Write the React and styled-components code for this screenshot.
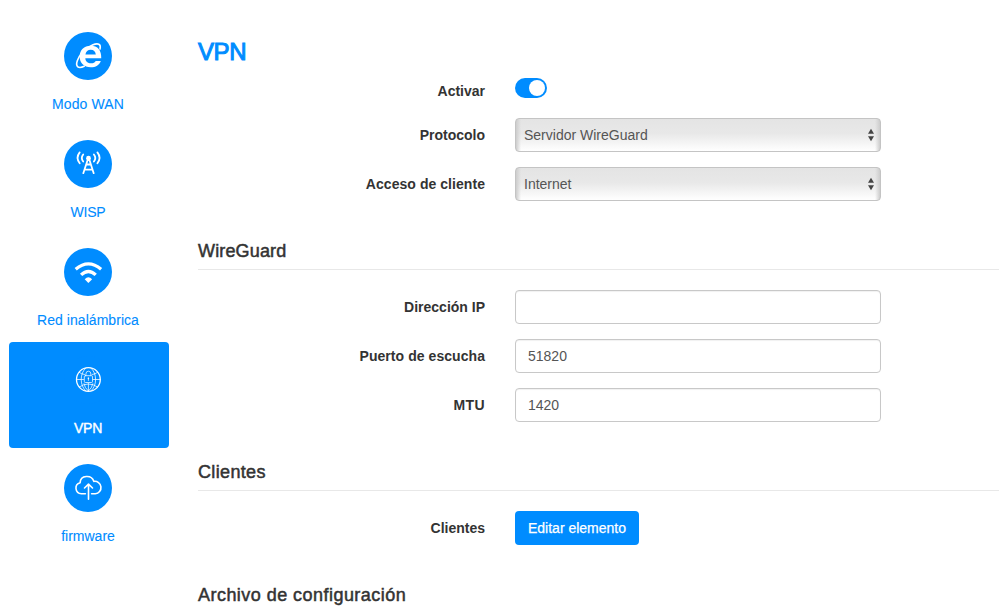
import React, { useState } from 'react';
import styled, { createGlobalStyle } from 'styled-components';

const BLUE = '#008cff';

const GlobalStyle = createGlobalStyle`
  * { box-sizing: border-box; }
  html, body { margin: 0; background: #fff; overflow: hidden; }
  body {
    font-family: "Liberation Sans", Arial, sans-serif;
    font-size: 14px;
    line-height: 20px;
    color: #333;
  }
`;

const Page = styled.div`
  display: flex;
  height: 610px;
  overflow: hidden;
`;

const Sidebar = styled.nav`
  display: flex;
  flex-direction: column;
  gap: 2px;
  width: 169px;
  flex: none;
  padding: 18px 0 0 9px;
`;

const NavItem = styled.a`
  display: flex;
  flex-direction: column;
  align-items: center;
  height: 106px;
  padding: 14px 2px 0 0;
  border-radius: 4px;
  text-decoration: none;
  white-space: nowrap;
  color: ${(p) => (p.$active ? '#fff' : BLUE)};
  background: ${(p) => (p.$active ? BLUE : 'transparent')};
  letter-spacing: ${(p) => p.$tracking || 0}px;
  -webkit-text-stroke: ${(p) => (p.$active ? '0.4px' : '0.1px')};
`;

const IconDisc = styled.span`
  width: 48px;
  height: 48px;
  margin-bottom: 14px;
  border-radius: 50%;
  background: ${BLUE};
  color: #fff;
`;

const Content = styled.main`
  flex: 1;
  min-width: 0;
  padding: 36px 0 0 29px;
`;

const Title = styled.h1`
  margin: 0 0 8px;
  font-size: 24px;
  line-height: 32px;
  font-weight: 400;
  letter-spacing: -0.4px;
  color: ${BLUE};
  -webkit-text-stroke: 1px;
`;

const Section = styled.h2`
  height: 30px;
  margin: 39px 0 20px;
  border-bottom: 1px solid #e8e8e8;
  font-size: 18px;
  line-height: 22px;
  font-weight: 400;
  letter-spacing: ${(p) => p.$tracking || 0}px;
  -webkit-text-stroke: 0.5px;
`;

const Row = styled.div`
  display: grid;
  grid-template-columns: 287px 366px;
  column-gap: 30px;
  height: ${(p) => p.$height || 34}px;
  margin-bottom: ${(p) => p.$gap ?? 15}px;
`;

const Label = styled.label`
  padding-top: ${(p) => p.$top ?? 7}px;
  text-align: right;
  font-weight: 700;
  white-space: nowrap;
  letter-spacing: ${(p) => p.$tracking || 0}px;
`;

const Toggle = styled.button`
  display: flex;
  justify-content: ${(p) => (p.$on ? 'flex-end' : 'flex-start')};
  width: 32px;
  height: 20px;
  margin-top: 2px;
  padding: 2px;
  border: 0;
  border-radius: 10px;
  background: ${(p) => (p.$on ? BLUE : '#ccc')};
`;

const Knob = styled.span`
  width: 16px;
  height: 16px;
  border-radius: 50%;
  background: #fff;
`;

const SelectBox = styled.div`
  display: flex;
  align-items: center;
  justify-content: space-between;
  height: 34px;
  padding: 0 4px 0 8px;
  border: 1px solid #c4c4c4;
  border-radius: 4px;
  background:
    linear-gradient(to right, #cdcdcd, rgba(205, 205, 205, 0) 5px, rgba(205, 205, 205, 0) calc(100% - 5px), #cdcdcd),
    linear-gradient(#e4e4e4, #e8e8e8 45%, #fff);
  color: #555;
`;

const Input = styled.input`
  width: 100%;
  height: 34px;
  padding: 6px 12px;
  border: 1px solid #c8c8c8;
  border-radius: 4px;
  background: #fff;
  box-shadow: inset 0 1px 1px rgba(0, 0, 0, 0.06);
  font: inherit;
  color: #555;
`;

const Button = styled.button`
  justify-self: start;
  width: 124px;
  height: 34px;
  padding: 0;
  border: 0;
  border-radius: 4px;
  background: ${BLUE};
  color: #fff;
  font: inherit;
  white-space: nowrap;
  -webkit-text-stroke: 0.25px;
`;

const Glyph = ({ children }) => (
  <svg width="48" height="48" viewBox="0 0 48 48" fill="none" stroke="currentColor" strokeLinecap="round" strokeLinejoin="round">
    {children}
  </svg>
);

const ExplorerIcon = () => (
  <Glyph>
    <path
      fill="currentColor"
      fillRule="evenodd"
      stroke="none"
      transform="translate(-4.9 .4) scale(1.13 .99)"
      d="M37.3 26H23.2C23.4 29.2 25.4 31.2 28.2 31.2C30.3 31.2 31.7 30.4 32.4 28.8H36.9C35.6 32.8 32.4 35.2 28 35.2C22 35.2 18.2 31 18.2 24.4C18.2 17.8 22 13.4 28 13.4C34.2 13.4 37.5 18 37.3 26ZM23.3 22.4H32.5C32.2 19.3 30.6 17.6 28 17.6C25.4 17.6 23.7 19.3 23.3 22.4Z"
    />
    <path d="M20.2 34.2C14.5 37 11.2 34.8 13.3 28.8C15.4 22.8 21.5 16 28.5 13C34 10.6 37.3 12 36 17" strokeWidth="1.6" />
  </Glyph>
);

const TowerIcon = () => (
  <Glyph>
    <g strokeWidth="1.8">
      <path d="M15.7 12.4Q11.4 17.8 15.7 23.3M19.2 14.5Q16.4 18 19.2 21.5M33.4 12.4Q37.7 17.8 33.4 23.3M29.9 14.5Q32.7 18 29.9 21.5" />
      <path d="M23.8 19.5L19.3 33.2M25.3 19.5L29.7 33.2M22.3 24.5H26.8M20.8 29.7H28.2" />
    </g>
    <circle cx="24.5" cy="18.2" r="2.4" fill="currentColor" stroke="none" />
  </Glyph>
);

const WifiIcon = () => (
  <Glyph>
    <g strokeWidth="3.3" strokeLinecap="butt">
      <path d="M11.7 21.3Q24.4 10.4 37.1 21.3" />
      <path d="M17.1 26.9Q24.4 19.9 31.7 26.9" />
    </g>
    <path d="M20.7 31.2Q24.4 27.4 28.1 31.2L24.4 34.9Z" fill="currentColor" stroke="none" />
  </Glyph>
);

const GlobeLockIcon = () => (
  <Glyph>
    <circle cx="24.4" cy="23.5" r="11.9" strokeWidth="1.3" />
    <g strokeWidth="0.75">
      <path d="M22 12C15.5 17 15.5 30 22 35M26.8 12C33.3 17 33.3 30 26.8 35M12.6 23.5H19.5M29.3 23.5H36.2M24.4 27.5V35.3M15.2 16.3Q17.5 18.3 20.5 18.5M33.6 16.3Q31.3 18.3 28.3 18.5M15.2 31Q24.4 24.8 33.6 31M20 27.8Q20.8 32 24.4 35Q28 32 28.8 27.8" />
      <rect x="20.3" y="19.7" width="8.2" height="6.8" rx="1" />
      <path d="M21.9 19.5V18Q21.9 15.2 24.4 15.2Q26.9 15.2 26.9 18V19.5M24.4 22V24.4" />
    </g>
    <circle cx="24.4" cy="22.3" r="0.8" fill="currentColor" stroke="none" />
  </Glyph>
);

const CloudIcon = () => (
  <Glyph>
    <g strokeWidth="1.6">
      <path d="M21.4 29.7H17.4A5.6 5.6 0 0 1 16.1 18.7C16.4 10.8 27.8 10.4 29.8 17.4A6.2 6.2 0 1 1 31.3 29.7H27.6" />
      <path d="M24.5 35.2V20.5M20.5 24L24.5 20.2L28.5 24" />
    </g>
  </Glyph>
);

const SortArrows = () => (
  <svg width="10" height="14" viewBox="0 0 10 14" fill="#444">
    <path d="M2 5.8L5 .8L8 5.8ZM2 8.2H8L5 13.2Z" />
  </svg>
);

const navItems = [
  { label: 'Modo WAN', icon: <ExplorerIcon />, tracking: 0.1 },
  { label: 'WISP', icon: <TowerIcon />, tracking: -0.2 },
  { label: 'Red inalámbrica', icon: <WifiIcon />, tracking: 0.05 },
  { label: 'VPN', icon: <GlobeLockIcon />, active: true, tracking: -0.2 },
  { label: 'firmware', icon: <CloudIcon /> },
];

export default function App() {
  const [on, setOn] = useState(true);
  return (
    <>
      <GlobalStyle />
      <Page>
        <Sidebar>
          {navItems.map((item) => (
            <NavItem key={item.label} $active={item.active} $tracking={item.tracking}>
              <IconDisc>{item.icon}</IconDisc>
              {item.label}
            </NavItem>
          ))}
        </Sidebar>
        <Content>
          <Title>VPN</Title>
          <Row $height={42} $gap={0}>
            <Label $top={5}>Activar</Label>
            <Toggle $on={on} onClick={() => setOn(!on)} aria-label="Activar"><Knob /></Toggle>
          </Row>
          <Row>
            <Label>Protocolo</Label>
            <SelectBox>Servidor WireGuard<SortArrows /></SelectBox>
          </Row>
          <Row>
            <Label $tracking={0.05}>Acceso de cliente</Label>
            <SelectBox>Internet<SortArrows /></SelectBox>
          </Row>
          <Section $tracking={0.15}>WireGuard</Section>
          <Row>
            <Label htmlFor="ip">Dirección IP</Label>
            <Input id="ip" />
          </Row>
          <Row>
            <Label htmlFor="port" $tracking={0.06}>Puerto de escucha</Label>
            <Input id="port" defaultValue="51820" />
          </Row>
          <Row>
            <Label htmlFor="mtu" $tracking={0.4}>MTU</Label>
            <Input id="mtu" defaultValue="1420" />
          </Row>
          <Section $tracking={0.35}>Clientes</Section>
          <Row>
            <Label>Clientes</Label>
            <Button>Editar elemento</Button>
          </Row>
          <Section $tracking={0.46}>Archivo de configuración</Section>
        </Content>
      </Page>
    </>
  );
}
